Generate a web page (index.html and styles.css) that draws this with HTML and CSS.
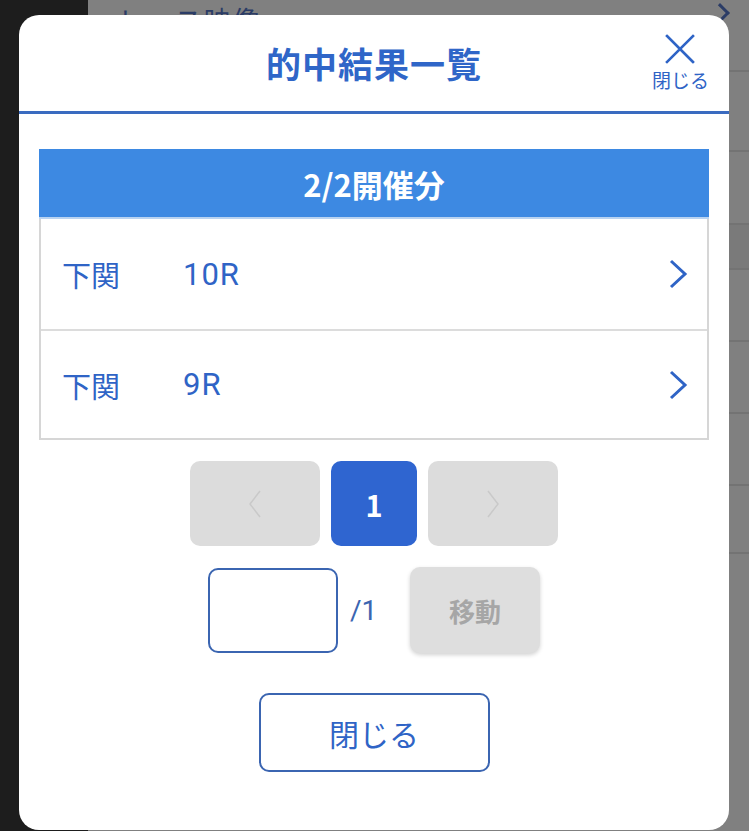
FILE: index.html
```html
<!DOCTYPE html>
<html lang="ja">
<head>
<meta charset="utf-8">
<title>的中結果一覧</title>
<link rel="stylesheet" href="styles.css">
</head>
<body>
<div class="page">
  <div class="side"></div>
  <div class="main">
    <div class="bg-row bg-first"><span class="bg-text">レース映像</span><span class="bg-chev"></span></div>
    <div class="bg-row bg-r2"></div>
    <div class="bg-row bg-r3"></div>
    <div class="bg-row bg-r4 bg-dark"></div>
    <div class="bg-row bg-r5"></div>
    <div class="bg-row bg-r5"></div>
    <div class="bg-row bg-r5"></div>
    <div class="bg-row bg-r6"></div>
  </div>
</div>

<div class="modal">
  <div class="modal-head">
    <h1 class="modal-title">的中結果一覧</h1>
    <div class="head-close">
      <svg class="x-icon" viewBox="0 0 30 30" width="30" height="30"><path d="M2 2 L28 28 M28 2 L2 28" stroke="#2f64c6" stroke-width="2.6" fill="none" stroke-linecap="square"/></svg>
      <span class="head-close-text">閉じる</span>
    </div>
  </div>
  <div class="modal-body">
    <div class="section-head">2/2開催分</div>
    <ul class="race-list">
      <li class="race-row"><span class="place">下関</span><span class="race">10R</span>
        <svg class="chev" viewBox="0 0 22 30" width="22" height="30"><path d="M4 2 L18 15 L4 28" stroke="#2f64c6" stroke-width="3" fill="none"/></svg></li>
      <li class="race-row"><span class="place">下関</span><span class="race">9R</span>
        <svg class="chev" viewBox="0 0 22 30" width="22" height="30"><path d="M4 2 L18 15 L4 28" stroke="#2f64c6" stroke-width="3" fill="none"/></svg></li>
    </ul>
    <div class="pager">
      <div class="pg-btn pg-nav"><svg viewBox="0 0 14 30" width="14" height="30"><path d="M12 2 L2 15 L12 28" stroke="#c9c9c9" stroke-width="1.5" fill="none"/></svg></div>
      <div class="pg-btn pg-current">1</div>
      <div class="pg-btn pg-nav"><svg viewBox="0 0 14 30" width="14" height="30"><path d="M2 2 L12 15 L2 28" stroke="#c9c9c9" stroke-width="1.5" fill="none"/></svg></div>
    </div>
    <div class="jump">
      <div class="jump-input"></div>
      <span class="jump-total">/1</span>
      <div class="jump-btn">移動</div>
    </div>
    <div class="close-btn">閉じる</div>
  </div>
</div>
</body>
</html>
```
FILE: styles.css
```css
* { box-sizing: border-box; }
html, body { margin: 0; padding: 0; }
body {
  width: 749px;
  height: 831px;
  overflow: hidden;
  background: #1d1d1d;
  font-family: "Noto Sans CJK JP", "Noto Sans", sans-serif;
  position: relative;
}
.page { display: flex; height: 831px; }
.side { width: 88px; background: #1d1d1d; }
.main { flex: 1; background: #808080; display: flex; flex-direction: column; }
.bg-row { border-bottom: 2px solid #737373; position: relative; }
.bg-first { height: 72px; padding-left: 30px; }
.bg-text {
  display: block;
  font-size: 27px;
  line-height: 27px;
  margin-top: 6px;
  color: #2b3c66;
  letter-spacing: 2px;
}
.bg-chev {
  position: absolute;
  right: 22px;
  top: 6px;
  width: 14px;
  height: 14px;
  border-top: 3px solid #2b3c66;
  border-right: 3px solid #2b3c66;
  transform: rotate(45deg);
}
.bg-r2 { height: 80px; }
.bg-r3 { height: 73px; }
.bg-r4 { height: 45px; }
.bg-dark { background: #7a7a7a; }
.bg-r5 { height: 72px; }
.bg-r6 { height: 68px; }

.modal {
  position: absolute;
  left: 19px;
  top: 15px;
  width: 710px;
  height: 815px;
  background: #fff;
  border-radius: 20px;
  overflow: hidden;
}
.modal-head {
  height: 99px;
  border-bottom: 3px solid #3a6bc0;
  display: flex;
  align-items: center;
  justify-content: center;
  position: relative;
}
.modal-title {
  margin: 0;
  font-size: 35px;
  font-weight: 700;
  color: #2f66c8;
  letter-spacing: 1px;
  line-height: 42px;
}
.head-close {
  position: absolute;
  right: 20px;
  top: 19px;
  display: flex;
  flex-direction: column;
  align-items: center;
}
.x-icon { display: block; }
.head-close-text {
  font-size: 19px;
  line-height: 22px;
  color: #2f64c6;
  margin-top: 5px;
}
.modal-body {
  padding: 35px 20px 0;
  display: flex;
  flex-direction: column;
  align-items: center;
}
.section-head {
  width: 100%;
  height: 70px;
  background: #3d89e2;
  border-bottom: 2px solid #b9d3f1;
  color: #fff;
  font-size: 31px;
  font-weight: 700;
  display: flex;
  align-items: center;
  justify-content: center;
}
.race-list {
  list-style: none;
  margin: 0;
  padding: 0;
  width: 100%;
  border: 2px solid #d6d6d6;
  border-top: none;
}
.race-row {
  height: 110px;
  display: flex;
  align-items: center;
  padding-left: 21px;
  padding-right: 18px;
  color: #2f64c6;
  font-size: 29px;
}
.race-row + .race-row { border-top: 2px solid #dcdcdc; height: 109px; }
.place { width: 121px; }
.race {
  flex: 1;
  font-family: Roboto, "Noto Sans CJK JP", sans-serif;
  font-size: 31px;
  letter-spacing: 1px;
}
.chev { display: block; }

.pager {
  display: flex;
  gap: 11px;
  margin-top: 21px;
}
.pg-btn {
  height: 85px;
  border-radius: 10px;
  display: flex;
  align-items: center;
  justify-content: center;
}
.pg-nav { width: 130px; background: #dcdcdc; }
.pg-current {
  width: 86px;
  background: #2f65d0;
  color: #fff;
  font-size: 29px;
  font-weight: 700;
}
.jump {
  display: flex;
  align-items: center;
  margin-top: 21px;
}
.jump-input {
  width: 130px;
  height: 85px;
  border: 2px solid #3b65b1;
  border-radius: 10px;
}
.jump-total {
  margin-left: 12px;
  width: 60px;
  font-family: Roboto, "Noto Sans CJK JP", sans-serif;
  font-size: 28px;
  color: #3b65b1;
}
.jump-btn {
  width: 130px;
  height: 86px;
  background: #dedede;
  border-radius: 10px;
  box-shadow: 0 2px 4px rgba(0,0,0,0.18);
  color: #a6a6a6;
  font-size: 26px;
  font-weight: 700;
  display: flex;
  align-items: center;
  justify-content: center;
}
.close-btn {
  margin-top: 40px;
  width: 231px;
  height: 79px;
  border: 2px solid #3b65b1;
  border-radius: 10px;
  color: #2f64c6;
  font-size: 30px;
  display: flex;
  align-items: center;
  justify-content: center;
}
```
